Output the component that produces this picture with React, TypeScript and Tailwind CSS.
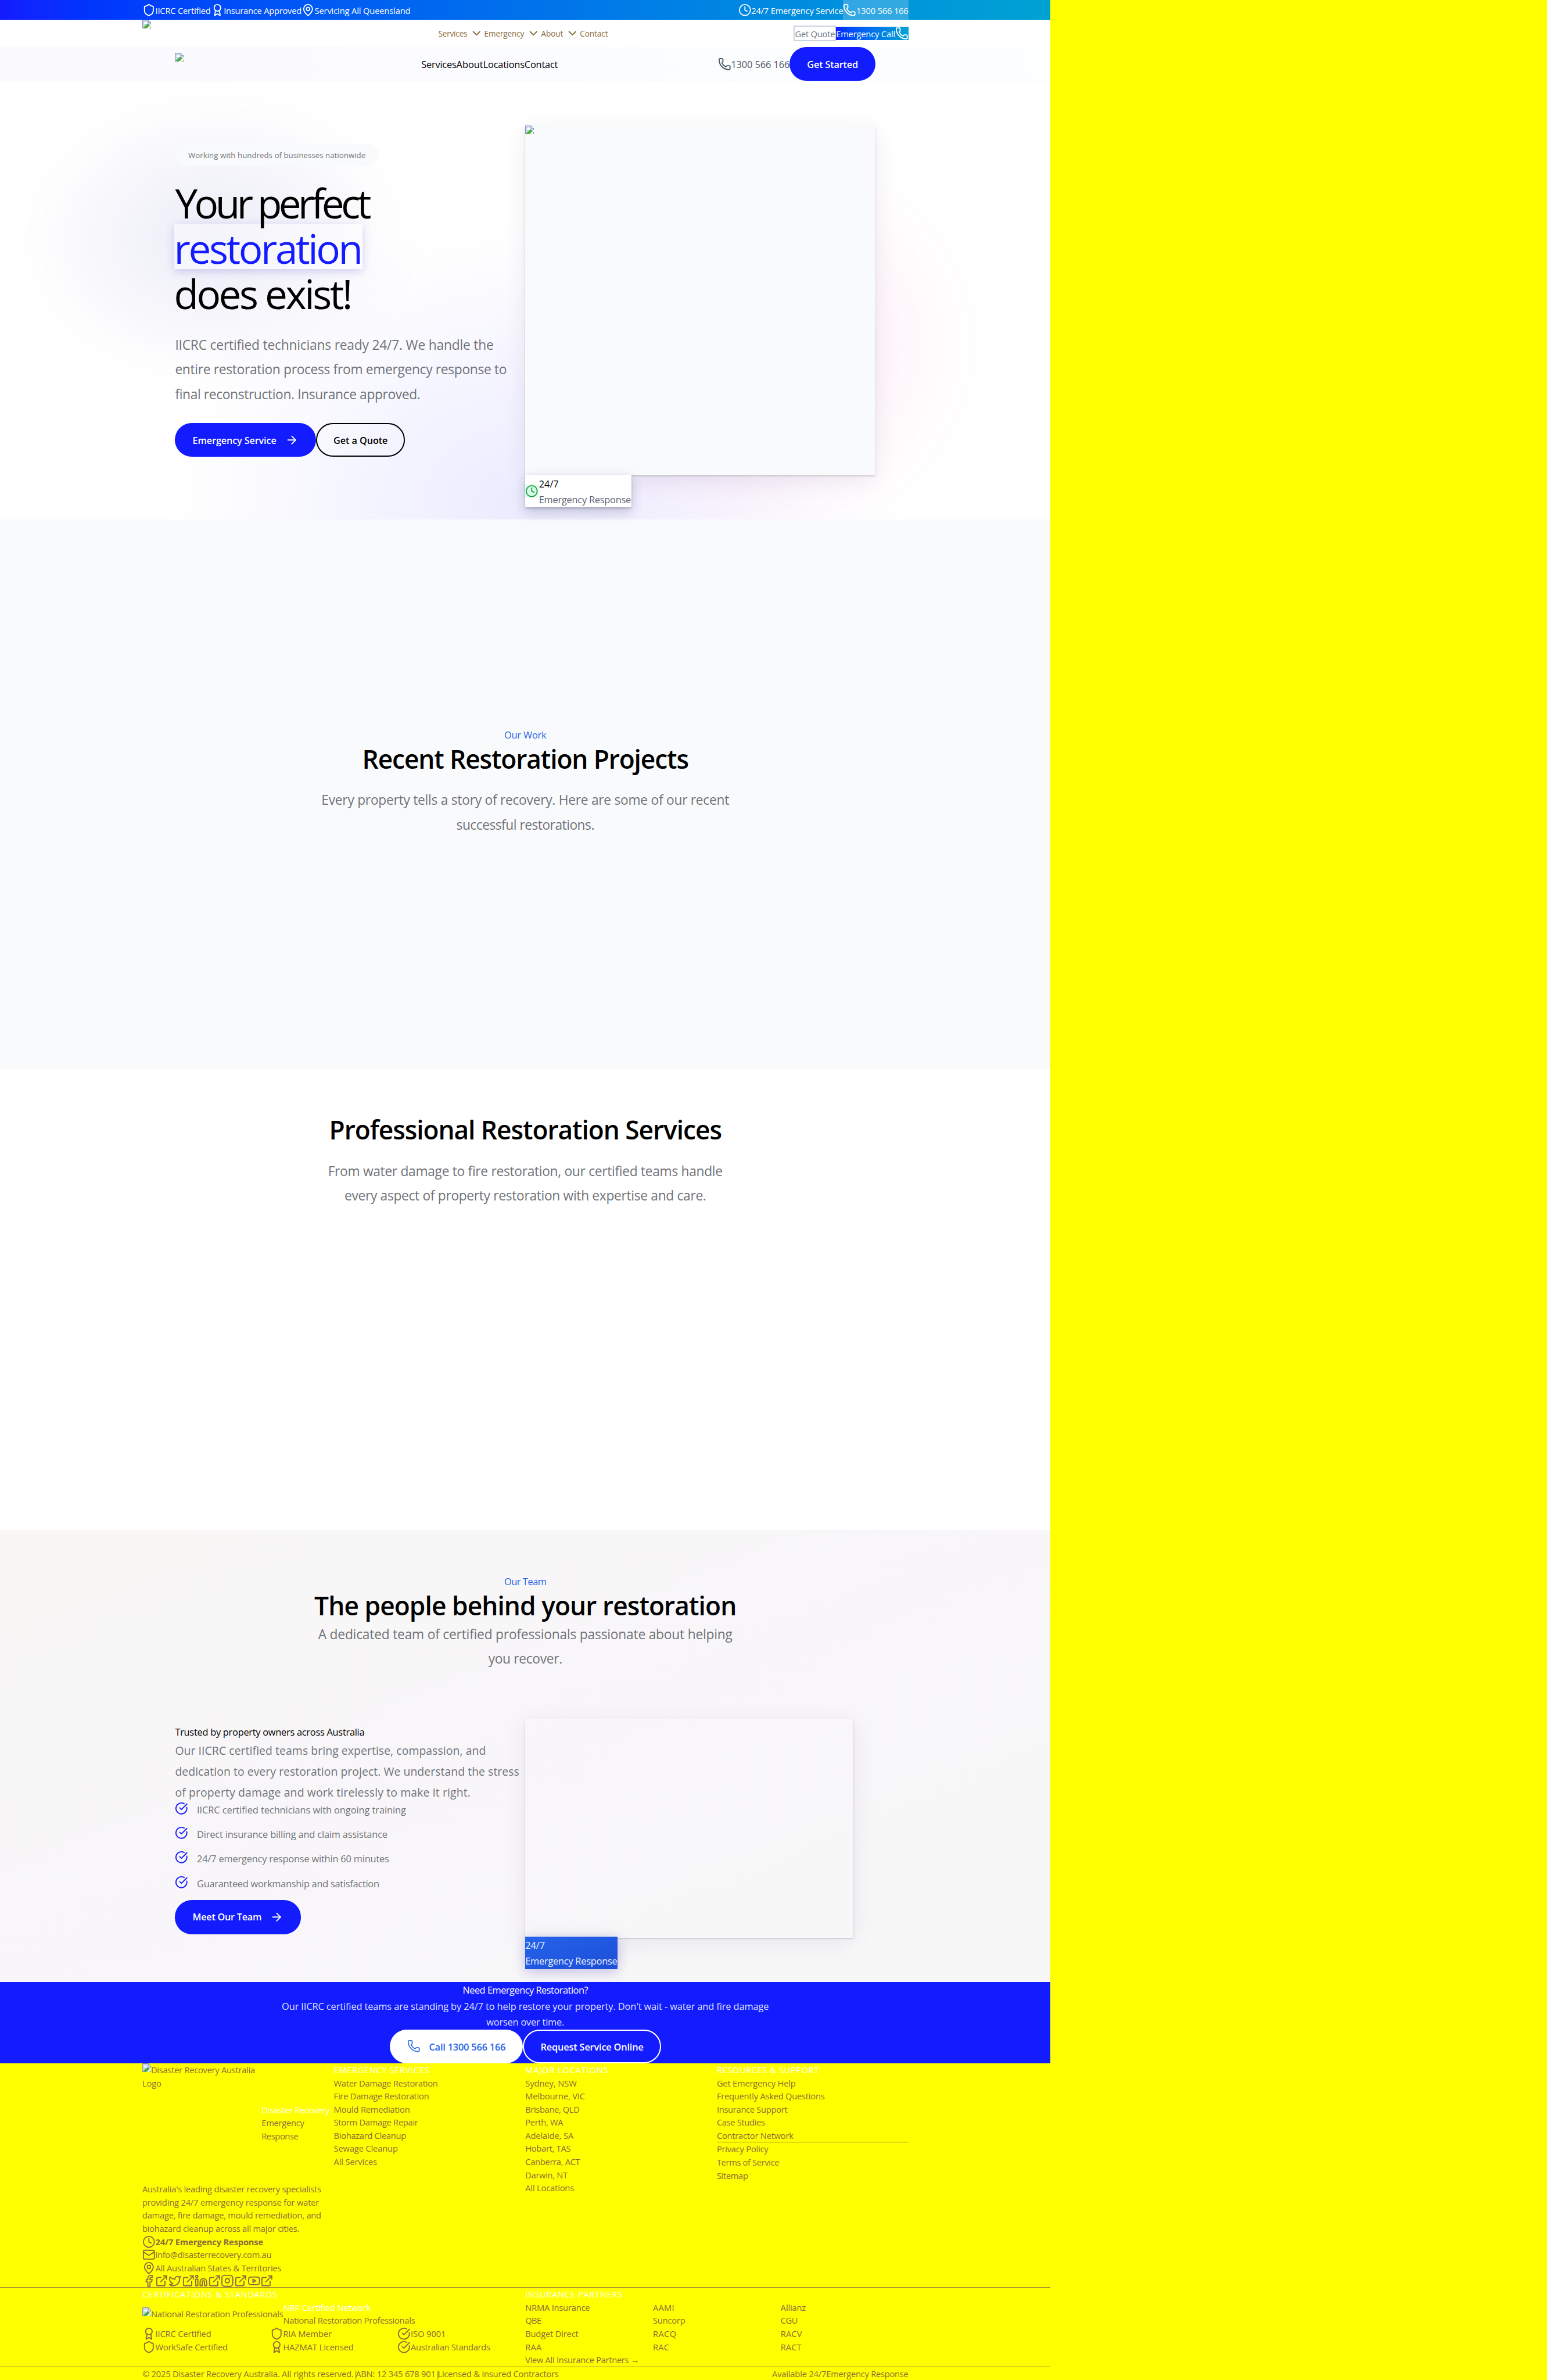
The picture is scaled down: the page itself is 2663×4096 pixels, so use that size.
import { useLayoutEffect, useRef, type ReactNode } from "react";
import {
  ArrowRight, Award, ChevronDown, CircleCheckBig, Clock, ExternalLink, Facebook,
  Instagram, Linkedin, Mail, MapPin, Phone, Shield, Twitter, Youtube,
} from "lucide-react";

const PAGE_WIDTH = 2827;

/** A single line of text, tracked so that it takes up exactly `w` page units. */
function T({ w, className = "translate-y-[0.04em]", children }: { w: number; className?: string; children: string }) {
  const ref = useRef<HTMLSpanElement>(null);
  useLayoutEffect(() => {
    const el = ref.current;
    const page = document.getElementById("page");
    if (!el || !page) return;
    const scale = page.getBoundingClientRect().width / PAGE_WIDTH;
    el.style.letterSpacing = "0px";
    const base = el.getBoundingClientRect().width;
    el.style.letterSpacing = "1px";
    const perPx = el.getBoundingClientRect().width - base;
    el.style.letterSpacing = `${(w * scale - base) / perPx}px`;
  }, [w]);
  return (
    <span ref={ref} className={`inline-block whitespace-nowrap ${className}`}>
      {children}
    </span>
  );
}

function BrokenImage() {
  return (
    <svg width="16" height="16" viewBox="0 0 16 16" className="shrink-0">
      <path d="M0.5 0.5H11L15.5 5V15.5H0.5Z" fill="#c3d5f6" />
      <path d="M0.5 15.5L10 7L15.5 12V15.5Z" fill="#4caf3a" />
      <path d="M8 16L16 8V16Z" fill="#ffffff" />
      <path d="M3 6.5a1.6 1.6 0 0 1 1.4-2 2 2 0 0 1 3.6.6 1.2 1.2 0 0 1 .3 2.3H3.6Z" fill="#fff" />
      <path d="M11 0.5V5H15.5" fill="#fff" stroke="#8a8f98" />
      <path d="M7 15.5H0.5V0.5H11L15.5 5V8" fill="none" stroke="#8a8f98" />
      <path d="M15.5 12V15.5H12" fill="none" stroke="#8a8f98" />
    </svg>
  );
}

function TopBar() {
  return (
    <div className="h-9 bg-linear-to-r from-[#131bff] to-[#00a2d3] text-white">
      <div className="mx-auto flex h-9 w-[1400px] items-center justify-between text-[15.6px]">
        <div className="flex items-center">
          <Shield size={24} /><T w={101}>IICRC Certified</T>
          <Award size={24} /><T w={142}>Insurance Approved</T>
          <MapPin size={24} /><T w={175}>Servicing All Queensland</T>
        </div>
        <div className="flex h-9 items-center">
          <Clock size={24} /><T w={168}>24/7 Emergency Service</T>
          <div className="flex h-9 items-center bg-white/20">
            <Phone size={24} /><T w={95}>1300 566 166</T>
          </div>
        </div>
      </div>
    </div>
  );
}

function NavChevron() {
  return <ChevronDown size={24} className="ml-[5px] mr-[2px]" />;
}

function Header() {
  return (
    <header className="h-[50px] bg-white">
      <div className="mx-auto flex h-[50px] w-[1400px] items-center justify-between">
        <div className="w-[541px] self-start"><BrokenImage /></div>
        <nav className="flex flex-1 items-center text-[14.4px] text-[#8a6a38]">
          <T w={53}>Services</T><NavChevron />
          <T w={73}>Emergency</T><NavChevron />
          <T w={40}>About</T><NavChevron />
          <T w={51}>Contact</T>
        </nav>
        <div className="flex items-center text-[15.6px]">
          <div className="flex h-7 items-center border-[2.2px] border-[#cbd5e1] text-[#6b7280]"><T w={73}>Get Quote</T></div>
          <div className="flex h-6 items-center bg-linear-to-r from-[#131bff] to-[#00a2d3] text-white">
            <T w={108}>Emergency Call</T><Phone size={24} />
          </div>
        </div>
      </div>
    </header>
  );
}

function SubNav() {
  return (
    <div className="h-[63px] border-b border-[#eff1f5] bg-linear-to-r from-[#fbfaff] via-[#fbfcff] to-[#fdfeff]">
      <div className="mx-auto flex h-[62px] w-[1280px] items-center">
        <div className="w-[450px] self-start pt-[11px]"><BrokenImage /></div>
        <nav className="flex flex-1 items-center text-[17.4px] text-black">
          <T w={64}>Services</T><T w={49}>About</T><T w={75.5}>Locations</T><T w={61}>Contact</T>
        </nav>
        <div className="flex items-center text-[17.4px] text-[#4b5563]">
          <Phone size={24} /><T w={107}>1300 566 166</T>
          <div className="flex h-[62px] w-[157px] items-center justify-center rounded-[31px] bg-[#131bff] font-semibold text-white">
            <T w={93}>Get Started</T>
          </div>
        </div>
      </div>
    </div>
  );
}

function Hero() {
  return (
    <section className="h-[800px] bg-white bg-[radial-gradient(ellipse_384px_290px_at_393px_287px,rgba(70,80,180,0.1)_0%,rgba(70,80,180,0.055)_45%,rgba(70,80,180,0.012)_80%,transparent_100%),radial-gradient(ellipse_470px_410px_at_1360px_480px,rgba(255,20,147,0.07)_0%,rgba(255,20,147,0.06)_40%,rgba(255,20,147,0.012)_80%,transparent_100%),radial-gradient(ellipse_680px_540px_at_960px_780px,rgba(60,60,255,0.1)_0%,rgba(60,60,255,0.06)_40%,rgba(60,60,255,0.012)_80%,transparent_100%)]">
      <div className="mx-auto grid w-[1280px] grid-cols-2">
        <div className="pt-[114px]">
          <div className="flex h-10 w-[372px] items-center justify-center rounded-full bg-[#f9fafc] text-[14px] text-[#707378]">
            <T w={324}>Working with hundreds of businesses nationwide</T>
          </div>
          <h1 className="mt-[23px] text-[73.5px] leading-[83px] text-black">
            <div className="h-[83px]"><T w={353}>Your perfect</T></div>
            <div className="-ml-[2px] h-[83px] w-[344px] bg-white/40 text-[#131bff] shadow-[0_4px_16px_rgba(60,50,200,0.22)]"><T w={342}>restoration</T></div>
            <div className="-ml-[2px] h-[83px]"><T w={323}>does exist!</T></div>
          </h1>
          <div className="mt-[31px] text-[24.2px] leading-[45px] text-[#707378]">
            <div><T w={582} className="translate-y-[0.08em]">IICRC certified technicians ready 24/7. We handle the</T></div>
            <div><T w={606} className="translate-y-[0.08em]">entire restoration process from emergency response to</T></div>
            <div><T w={448} className="translate-y-[0.08em]">final reconstruction. Insurance approved.</T></div>
          </div>
          <div className="mt-8 flex text-[17.2px] font-semibold">
            <div className="flex h-[62px] w-[258px] items-center rounded-[31px] bg-[#131bff] pl-8 text-white">
              <T w={153}>Emergency Service</T><ArrowRight size={24} strokeWidth={2} className="ml-4" />
            </div>
            <div className="flex h-[62px] w-[162px] items-center justify-center rounded-[31px] border-[2.2px] border-black text-black">
              <T w={99}>Get a Quote</T>
            </div>
          </div>
        </div>
        <div className="pt-20">
          <div className="h-[640px] w-[640px] bg-[#f9fafc] shadow-[0_2px_3px_rgba(0,0,0,0.2),0_8px_40px_rgba(0,0,60,0.08)]"><BrokenImage /></div>
          <div className="relative -mt-[2px] flex h-[60px] w-[194px] items-center bg-white text-[17.4px] leading-[29px] shadow-[0_2px_4px_rgba(0,0,0,0.2),0_8px_24px_rgba(0,0,60,0.2)]">
            <div className="flex h-6 w-6 bg-[#dcfce7] text-[#16a34a]"><Clock size={24} /></div>
            <div className="pl-[1px]">
              <div className="h-[29px] text-black"><T w={36}>24/7</T></div>
              <div className="h-[29px] text-[#5b6070]"><T w={168}>Emergency Response</T></div>
            </div>
          </div>
        </div>
      </div>
    </section>
  );
}

function Lead({ rows }: { rows: [string, number][] }) {
  return (
    <div className="text-[24.2px] leading-[45px] text-[#707378]">
      {rows.map(([t, w]) => (
        <div key={t} className="h-[45px]"><T w={w} className="translate-y-[0.08em]">{t}</T></div>
      ))}
    </div>
  );
}

function Eyebrow({ w, children }: { w: number; children: string }) {
  return <div className="h-[29px] text-[17.4px] leading-[29px] text-[#2563eb]"><T w={w}>{children}</T></div>;
}

function Heading({ w, children }: { w: number; children: string }) {
  return <h2 className="h-[58px] text-[47px] font-semibold leading-[58px] text-black"><T w={w}>{children}</T></h2>;
}

function Projects() {
  return (
    <section className="h-[1005px] bg-[#f9fafc] pt-[378px] text-center">
      <Eyebrow w={77}>Our Work</Eyebrow>
      <Heading w={596}>Recent Restoration Projects</Heading>
      <div className="pt-6">
        <Lead rows={[["Every property tells a story of recovery. Here are some of our recent", 745], ["successful restorations.", 252]]} />
      </div>
    </section>
  );
}

function Services() {
  return (
    <section className="h-[841px] bg-white pt-[79px] text-center">
      <Heading w={717}>Professional Restoration Services</Heading>
      <div className="pt-[25px]">
        <Lead rows={[["From water damage to fire restoration, our certified teams handle", 721], ["every aspect of property restoration with expertise and care.", 661]]} />
      </div>
    </section>
  );
}

const PROMISES: [string, number][] = [
  ["IICRC certified technicians with ongoing training", 382],
  ["Direct insurance billing and claim assistance", 348],
  ["24/7 emergency response within 60 minutes", 351],
  ["Guaranteed workmanship and satisfaction", 333],
];

function Team() {
  return (
    <section className="h-[826px] bg-linear-to-br from-[#f8f7f5] via-[#f8f6f9] to-[#f8f7f7] pt-[79px]">
      <div className="text-center">
        <Eyebrow w={77}>Our Team</Eyebrow>
        <Heading w={771}>The people behind your restoration</Heading>
        <div className="pt-[1px]">
          <Lead rows={[["A dedicated team of certified professionals passionate about helping", 757], ["you recover.", 135]]} />
        </div>
      </div>
      <div className="mx-auto mt-[89px] grid w-[1280px] grid-cols-2">
        <div className="pt-2">
          <div className="h-[30px] text-[17.4px] leading-[29px] text-black"><T w={346}>Trusted by property owners across Australia</T></div>
          <div className="text-[20.6px] leading-[38px] text-[#707378]">
            <div className="h-[38px]"><T w={568}>Our IICRC certified teams bring expertise, compassion, and</T></div>
            <div className="h-[38px]"><T w={629}>dedication to every restoration project. We understand the stress</T></div>
            <div className="h-[38px]"><T w={540}>of property damage and work tirelessly to make it right.</T></div>
          </div>
          <ul className="-mt-[1px] text-[17.4px] leading-[29px] text-[#707378]">
            {PROMISES.map(([t, w]) => (
              <li key={t} className="flex h-[45px] gap-4">
                <CircleCheckBig size={24} className="text-[#131bff]" /><T w={w} className="">{t}</T>
              </li>
            ))}
          </ul>
          <div className="flex h-[62px] w-[230px] items-center rounded-[31px] bg-[#131bff] pl-8 text-[17.2px] font-semibold text-white">
            <T w={126} className="">Meet Our Team</T><ArrowRight size={24} strokeWidth={2} className="ml-4" />
          </div>
        </div>
        <div>
          <div className="h-[400px] w-[600px] shadow-[0_2px_3px_rgba(0,0,0,0.2),0_8px_40px_rgba(40,30,120,0.08)]" />
          <div className="relative -mt-[2px] h-[59px] w-[169px] bg-linear-to-br from-[#2563eb] to-[#1d4ed8] text-[17.4px] leading-[29px] text-[#eef3ff] shadow-[0_4px_24px_rgba(40,30,160,0.28)]">
            <div className="h-[29px]"><T w={36}>24/7</T></div>
            <div className="h-[29px]"><T w={168} className="">Emergency Response</T></div>
          </div>
        </div>
      </div>
    </section>
  );
}

function CallToAction() {
  return (
    <section className="h-[149px] bg-[#131bff] text-center text-[17.4px] leading-[29px]">
      <div className="h-[29px] text-white"><T w={229} className="">Need Emergency Restoration?</T></div>
      <div className="h-[58px] text-[#dfe3ff]">
        <div className="h-[29px]"><T w={890}>Our IICRC certified teams are standing by 24/7 to help restore your property. Don't wait - water and fire damage</T></div>
        <div className="h-[29px]"><T w={142}>worsen over time.</T></div>
      </div>
      <div className="flex justify-center font-semibold">
        <div className="flex h-[62px] w-[244px] items-center rounded-[31px] bg-white pl-8 text-[#2563eb]">
          <Phone size={24} strokeWidth={1.7} className="mr-4" /><T w={140}>Call 1300 566 166</T>
        </div>
        <div className="flex h-[62px] w-[252px] items-center justify-center rounded-[31px] border-[2.2px] border-white text-white">
          <T w={188}>Request Service Online</T>
        </div>
      </div>
    </section>
  );
}

function LinkList({ items }: { items: [string, number][] }) {
  return (
    <>
      {items.map(([t, w]) => <div key={t} className="h-6"><T w={w} className="">{t}</T></div>)}
    </>
  );
}

function FootTitle({ w, children }: { w: number; children: string }) {
  return <div className="h-6 text-white"><T w={w} className="">{children}</T></div>;
}

function IconText({ icon, children }: { icon: ReactNode; children: ReactNode }) {
  return <div className="flex h-6 items-center">{icon}{children}</div>;
}

const SOCIALS = [Facebook, Twitter, Linkedin, Instagram, Youtube];

function Footer() {
  return (
    <footer className="text-[15.6px] leading-6 text-[#8b6b3c]">
      <div className="mx-auto grid h-[409px] w-[1400px] grid-cols-4">
        <div>
          <div className="flex h-[218px] items-center">
            <div className="h-[218px] w-[218px]">
              <div className="flex h-6"><BrokenImage /><T w={190} className="">Disaster Recovery Australia</T></div>
              <div className="h-6"><T w={35} className="">Logo</T></div>
            </div>
            <div>
              <div className="h-6 font-medium text-white"><T w={124} className="">Disaster Recovery</T></div>
              <LinkList items={[["Emergency", 78], ["Response", 67]]} />
            </div>
          </div>
          <LinkList items={[
            ["Australia's leading disaster recovery specialists", 327],
            ["providing 24/7 emergency response for water", 323],
            ["damage, fire damage, mould remediation, and", 327],
            ["biohazard cleanup across all major cities.", 287],
          ]} />
          <IconText icon={<Clock size={24} />}><T w={197} className="font-bold">24/7 Emergency Response</T></IconText>
          <IconText icon={<Mail size={24} />}><T w={212} className="">info@disasterrecovery.com.au</T></IconText>
          <IconText icon={<MapPin size={24} />}><T w={230} className="">All Australian States &amp; Territories</T></IconText>
          <div className="flex h-6">
            {SOCIALS.map((Icon, i) => (
              <div key={i} className="flex"><Icon size={24} /><ExternalLink size={24} /></div>
            ))}
          </div>
        </div>
        <div>
          <FootTitle w={175}>EMERGENCY SERVICES</FootTitle>
          <LinkList items={[
            ["Water Damage Restoration", 190], ["Fire Damage Restoration", 174], ["Mould Remediation", 139],
            ["Storm Damage Repair", 154], ["Biohazard Cleanup", 132], ["Sewage Cleanup", 117], ["All Services", 79],
          ]} />
        </div>
        <div>
          <FootTitle w={152}>MAJOR LOCATIONS</FootTitle>
          <LinkList items={[
            ["Sydney, NSW", 94], ["Melbourne, VIC", 109], ["Brisbane, QLD", 99], ["Perth, WA", 69], ["Adelaide, SA", 88],
            ["Hobart, TAS", 83], ["Canberra, ACT", 100], ["Darwin, NT", 77], ["All Locations", 89],
          ]} />
        </div>
        <div>
          <FootTitle w={187}>RESOURCES &amp; SUPPORT</FootTitle>
          <LinkList items={[
            ["Get Emergency Help", 144], ["Frequently Asked Questions", 197], ["Insurance Support", 129],
            ["Case Studies", 88], ["Contractor Network", 140],
          ]} />
          <div className="border-t border-[#8b6b3c]">
            <LinkList items={[["Privacy Policy", 94], ["Terms of Service", 114], ["Sitemap", 57]]} />
          </div>
        </div>
      </div>
      <div className="w-[1920px] border-t border-[#8b6b3c]">
        <div className="mx-auto grid h-[144px] w-[1400px] grid-cols-2">
          <div>
            <FootTitle w={247}>CERTIFICATIONS &amp; STANDARDS</FootTitle>
            <div className="flex h-12 items-center">
              <div className="flex h-6"><BrokenImage /><T w={241.5} className="">National Restoration Professionals</T></div>
              <div>
                <FootTitle w={160}>NRP Certified Network</FootTitle>
                <div className="h-6"><T w={241} className="">National Restoration Professionals</T></div>
              </div>
            </div>
            <div className="grid grid-cols-3">
              <IconText icon={<Award size={24} />}><T w={102} className="">IICRC Certified</T></IconText>
              <IconText icon={<Shield size={24} />}><T w={89} className="">RIA Member</T></IconText>
              <IconText icon={<CircleCheckBig size={24} />}><T w={64} className="">ISO 9001</T></IconText>
              <IconText icon={<Shield size={24} />}><T w={132} className="">WorkSafe Certified</T></IconText>
              <IconText icon={<Award size={24} />}><T w={129} className="">HAZMAT Licensed</T></IconText>
              <IconText icon={<CircleCheckBig size={24} />}><T w={145} className="">Australian Standards</T></IconText>
            </div>
          </div>
          <div>
            <FootTitle w={178}>INSURANCE PARTNERS</FootTitle>
            <div className="grid grid-cols-3">
              <LinkList items={[
                ["NRMA Insurance", 118], ["AAMI", 39], ["Allianz", 46],
                ["QBE", 29], ["Suncorp", 59], ["CGU", 31],
                ["Budget Direct", 97], ["RACQ", 43], ["RACV", 39],
                ["RAA", 30], ["RAC", 30], ["RACT", 38],
              ]} />
            </div>
            <div className="h-6"><T w={208} className="">View All Insurance Partners →</T></div>
          </div>
        </div>
      </div>
      <div className="w-[1920px] border-t border-[#8b6b3c]">
        <div className="mx-auto flex h-6 w-[1400px] justify-between">
          <div className="flex">
            <T w={386} className="">© 2025 Disaster Recovery Australia. All rights reserved.</T><T w={4} className="">|</T>
            <T w={146} className="">ABN: 12 345 678 901</T><T w={4} className="">|</T><T w={221} className="">Licensed &amp; Insured Contractors</T>
          </div>
          <div className="flex"><T w={99} className="">Available 24/7</T><T w={150} className="">Emergency Response</T></div>
        </div>
      </div>
    </footer>
  );
}

export default function App() {
  return (
    <div className="h-[4096px] w-[2663px] overflow-hidden bg-[#ffff00]">
      <div id="page" className="h-[4349px] w-[2827px] bg-[#ffff00] font-['Open_Sans',sans-serif] [font-stretch:92%] [zoom:0.9419]">
        <div className="w-[1920px]">
          <TopBar />
          <Header />
          <SubNav />
          <Hero />
          <Projects />
          <Services />
          <Team />
          <CallToAction />
          <Footer />
        </div>
      </div>
    </div>
  );
}
